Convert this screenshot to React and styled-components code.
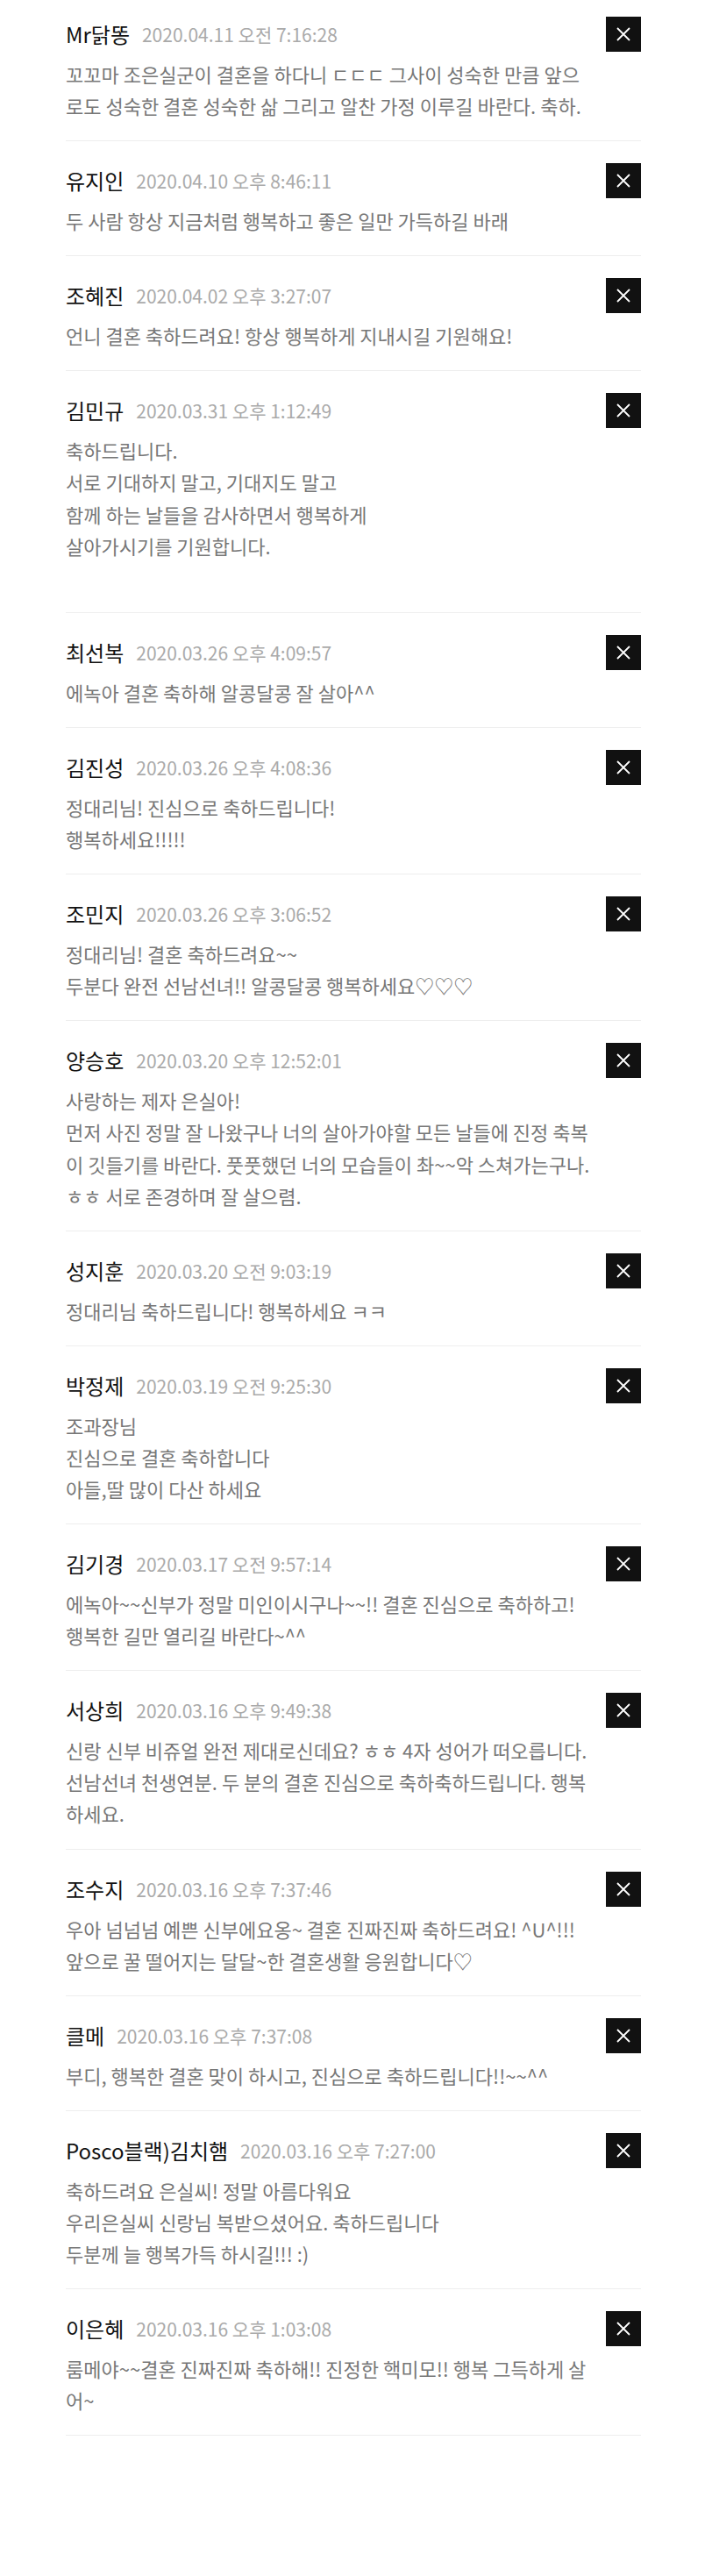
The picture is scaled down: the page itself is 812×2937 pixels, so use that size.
import React from "react"
import styled, { createGlobalStyle } from "styled-components"

const GlobalStyle = createGlobalStyle`
  html, body {
    margin: 0;
    padding: 0;
    background: #fff;
  }
  body {
    font-family: "Noto Sans CJK KR", "Noto Sans", sans-serif;
  }
`

const Page = styled.div`
  padding: 0 81px 160px 75px;
`

const CommentList = styled.ul`
  list-style: none;
  margin: 0;
  padding: 0;
`

const Comment = styled.li`
  padding: 25px 0 22px;
  border-bottom: 1px solid #eee;

  &:first-child {
    padding-top: 19px;
  }
`

const Header = styled.div`
  display: flex;
  align-items: center;
  height: 40px;
`

const Name = styled.span`
  font-size: 24px;
  color: #111;
  line-height: 40px;
`

const Date = styled.span`
  margin-left: 14px;
  font-size: 21px;
  color: #aaa;
  line-height: 40px;
`

const DeleteButton = styled.button`
  margin-left: auto;
  width: 40px;
  height: 40px;
  border: 0;
  padding: 0;
  background: #111;
  display: flex;
  align-items: center;
  justify-content: center;
  cursor: pointer;
`

const Body = styled.div`
  margin-top: 7px;
  font-size: 22px;
  line-height: 36.1px;
  color: #777;
  word-break: break-all;
`

const Line = styled.div`
  min-height: 36.1px;
  white-space: pre-wrap;
`

const comments = [
  {
    name: "Mr닭똥",
    date: "2020.04.11 오전 7:16:28",
    text: "꼬꼬마 조은실군이 결혼을 하다니 ㄷㄷㄷ 그사이 성숙한 만큼 앞으\n로도 성숙한 결혼 성숙한 삶 그리고 알찬 가정 이루길 바란다. 축하.",
  },
  {
    name: "유지인",
    date: "2020.04.10 오후 8:46:11",
    text: "두 사람 항상 지금처럼 행복하고 좋은 일만 가득하길 바래",
  },
  {
    name: "조혜진",
    date: "2020.04.02 오후 3:27:07",
    text: "언니 결혼 축하드려요! 항상 행복하게 지내시길 기원해요!",
  },
  {
    name: "김민규",
    date: "2020.03.31 오후 1:12:49",
    text: "축하드립니다.\n서로 기대하지 말고, 기대지도 말고\n함께 하는 날들을 감사하면서 행복하게\n살아가시기를 기원합니다.\n",
  },
  {
    name: "최선복",
    date: "2020.03.26 오후 4:09:57",
    text: "에녹아 결혼 축하해 알콩달콩 잘 살아^^",
  },
  {
    name: "김진성",
    date: "2020.03.26 오후 4:08:36",
    text: "정대리님! 진심으로 축하드립니다!\n행복하세요!!!!!",
  },
  {
    name: "조민지",
    date: "2020.03.26 오후 3:06:52",
    text: "정대리님! 결혼 축하드려요~~\n두분다 완전 선남선녀!! 알콩달콩 행복하세요♡♡♡",
  },
  {
    name: "양승호",
    date: "2020.03.20 오후 12:52:01",
    text: "사랑하는 제자 은실아!\n먼저 사진 정말 잘 나왔구나 너의 살아가야할 모든 날들에 진정 축복\n이 깃들기를 바란다. 풋풋했던 너의 모습들이 촤~~악 스쳐가는구나.\nㅎㅎ 서로 존경하며 잘 살으렴.",
  },
  {
    name: "성지훈",
    date: "2020.03.20 오전 9:03:19",
    text: "정대리님 축하드립니다! 행복하세요 ㅋㅋ",
  },
  {
    name: "박정제",
    date: "2020.03.19 오전 9:25:30",
    text: "조과장님\n진심으로 결혼 축하합니다\n아들,딸 많이 다산 하세요",
  },
  {
    name: "김기경",
    date: "2020.03.17 오전 9:57:14",
    text: "에녹아~~신부가 정말 미인이시구나~~!! 결혼 진심으로 축하하고!\n행복한 길만 열리길 바란다~^^",
  },
  {
    name: "서상희",
    date: "2020.03.16 오후 9:49:38",
    text: "신랑 신부 비쥬얼 완전 제대로신데요? ㅎㅎ 4자 성어가 떠오릅니다.\n선남선녀 천생연분. 두 분의 결혼 진심으로 축하축하드립니다. 행복\n하세요.",
  },
  {
    name: "조수지",
    date: "2020.03.16 오후 7:37:46",
    text: "우아 넘넘넘 예쁜 신부에요옹~ 결혼 진짜진짜 축하드려요! ^U^!!!\n앞으로 꿀 떨어지는 달달~한 결혼생활 응원합니다♡",
  },
  {
    name: "클메",
    date: "2020.03.16 오후 7:37:08",
    text: "부디, 행복한 결혼 맞이 하시고, 진심으로 축하드립니다!!~~^^",
  },
  {
    name: "Posco블랙)김치햄",
    date: "2020.03.16 오후 7:27:00",
    text: "축하드려요 은실씨! 정말 아름다워요\n우리은실씨 신랑님 복받으셨어요. 축하드립니다\n두분께 늘 행복가득 하시길!!! :)",
  },
  {
    name: "이은혜",
    date: "2020.03.16 오후 1:03:08",
    text: "룸메야~~결혼 진짜진짜 축하해!! 진정한 핵미모!! 행복 그득하게 살\n어~",
  },
]

const CloseIcon = () => (
  <svg width="16" height="16" viewBox="0 0 16 16">
    <path d="M1 1 L15 15 M15 1 L1 15" stroke="#fff" strokeWidth="1.8" fill="none" />
  </svg>
)

const App = () => {
  return (
    <>
      <GlobalStyle />
      <Page>
        <CommentList>
          {comments.map((c, i) => (
            <Comment key={i}>
              <Header>
                <Name>{c.name}</Name>
                <Date>{c.date}</Date>
                <DeleteButton aria-label="삭제">
                  <CloseIcon />
                </DeleteButton>
              </Header>
              <Body>
                {c.text.split("\n").map((line, j) => (
                  <Line key={j}>{line}</Line>
                ))}
              </Body>
            </Comment>
          ))}
        </CommentList>
      </Page>
    </>
  )
}

export default App
